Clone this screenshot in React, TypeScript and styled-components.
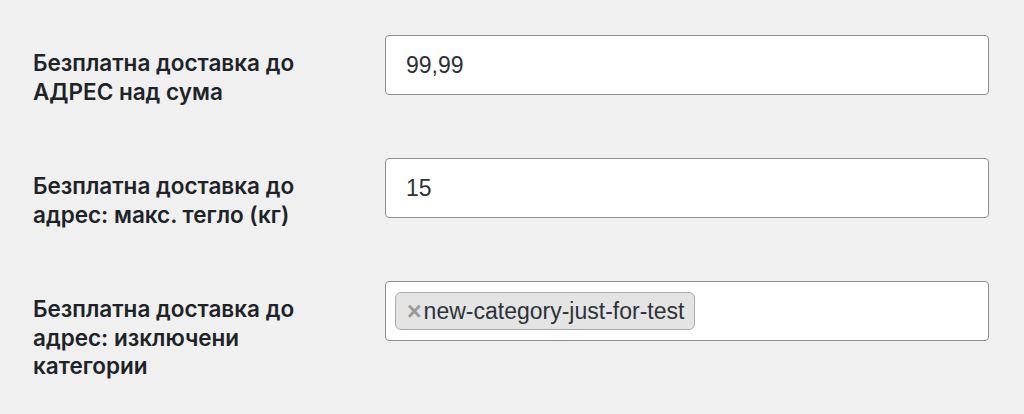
import styled, { createGlobalStyle } from 'styled-components';

const GlobalStyle = createGlobalStyle`
  html, body {
    margin: 0;
    padding: 0;
    background: #f0f0f1;
  }
  body {
    font-family: "Liberation Sans", Arial, sans-serif;
    color: #1d2327;
  }
`;

const Form = styled.div`
  display: flex;
  flex-direction: column;
  gap: 52px;
  padding: 35px 0 0 33px;
  width: 956px;
`;

const Row = styled.div`
  display: grid;
  grid-template-columns: 352px 604px;
  align-items: start;
`;

const Label = styled.label`
  padding-top: 14px;
  font-family: Inter, "Noto Sans", sans-serif;
  font-feature-settings: "locl" 1;
  font-weight: 600;
  font-size: 22.5px;
  line-height: 28.5px;
  color: #1d2327;
  width: 300px;
`;

const TextInput = styled.input`
  box-sizing: border-box;
  width: 604px;
  height: 60px;
  margin: 0;
  padding: 0 20px;
  border: 1px solid #8c8f94;
  border-radius: 4px;
  background: #fff;
  font-family: "Liberation Sans", Arial, sans-serif;
  font-size: 23px;
  color: #2c3338;
  outline: none;
`;

const TagBox = styled.div`
  box-sizing: border-box;
  width: 604px;
  height: 60px;
  padding: 8px 9px;
  border: 1px solid #8c8f94;
  border-radius: 4px;
  background: #fff;
  display: flex;
  align-items: center;
`;

const Chip = styled.span`
  box-sizing: border-box;
  display: inline-flex;
  align-items: center;
  height: 38px;
  padding: 0 10px 0 11px;
  border: 1px solid #aaa;
  border-radius: 6px;
  background: #e4e4e4;
  font-size: 23px;
  color: #2c3338;
`;

const Remove = styled.span`
  font-weight: 700;
  font-size: 25px;
  line-height: 1;
  color: #999;
  margin-right: 2px;
  cursor: pointer;
`;

export default function App() {
  return (
    <>
      <GlobalStyle />
      <Form lang="bg">
        <Row>
          <Label>Безплатна доставка до АДРЕС над сума</Label>
          <TextInput type="text" defaultValue="99,99" />
        </Row>
        <Row>
          <Label>Безплатна доставка до адрес: макс. тегло (кг)</Label>
          <TextInput type="text" defaultValue="15" />
        </Row>
        <Row>
          <Label>Безплатна доставка до адрес: изключени категории</Label>
          <TagBox>
            <Chip>
              <Remove>×</Remove>new-category-just-for-test
            </Chip>
          </TagBox>
        </Row>
      </Form>
    </>
  );
}
